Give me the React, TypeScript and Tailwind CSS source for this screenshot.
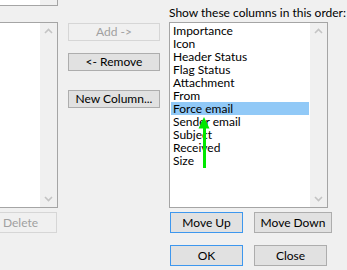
import React from "react"

const columns = [
  "Importance",
  "Icon",
  "Header Status",
  "Flag Status",
  "Attachment",
  "From",
  "Force email",
  "Sender email",
  "Subject",
  "Received",
  "Size",
]

function Chevron({ down = false }: { down?: boolean }) {
  return (
    <svg width="17" height="17" viewBox="0 0 17 17" className="block">
      <path
        d={down ? "M5 7 L8.5 10.5 L12 7" : "M5 10 L8.5 6.5 L12 10"}
        fill="none"
        stroke="#c4c4c4"
        strokeWidth="1.6"
      />
    </svg>
  )
}

function ScrollBar({ arrows = true }: { arrows?: boolean }) {
  return (
    <div className="w-[17px] shrink-0 bg-[#f0f0f0] flex flex-col justify-between">
      {arrows && <Chevron />}
      {arrows && <Chevron down />}
    </div>
  )
}

function Button({
  label,
  w,
  h,
  variant = "normal",
}: {
  label: string
  w: string
  h: string
  variant?: "normal" | "disabled" | "focus"
}) {
  const styles = {
    normal: "bg-[#e1e1e1] border-[#adadad] text-black",
    disabled: "bg-[#f0f0f0] border-[#d6d6d6] text-[#a0a0a0]",
    focus: "bg-[#e1e1e1] border-[#3d97ee] text-black",
  }
  return (
    <div className={`${w} ${h} ${styles[variant]} shrink-0 border flex items-center justify-center leading-none`}>
      {label}
    </div>
  )
}

export default function App() {
  return (
    <div className="relative flex w-[347px] h-[270px] overflow-hidden bg-[#f0f0f0] text-[12px] text-black font-['Segoe_UI','Lato',sans-serif]">
      {/* left: available columns */}
      <div className="-ml-[16px] w-[74px] shrink-0 flex flex-col">
        <div className="h-[6px] flex border-r border-b border-[#a5a5a5]">
          <div className="flex-1 bg-white" />
          <ScrollBar arrows={false} />
        </div>
        <div className="mt-[16px] h-[186px] flex border-t border-r border-b border-[#a5a5a5]">
          <div className="flex-1 bg-white" />
          <ScrollBar />
        </div>
        <div className="mt-[4px]">
          <Button label="Delete" w="w-[73px]" h="h-[21px]" variant="disabled" />
        </div>
      </div>

      {/* middle buttons */}
      <div className="ml-[10px] w-[92px] shrink-0 flex flex-col pt-[23px]">
        <Button label="Add ->" w="w-[92px]" h="h-[18px]" variant="disabled" />
        <div className="mt-[12px]">
          <Button label="<- Remove" w="w-[92px]" h="h-[18px]" />
        </div>
        <div className="mt-[19px]">
          <Button label="New Column..." w="w-[92px]" h="h-[18px]" />
        </div>
      </div>

      {/* right: shown columns */}
      <div className="ml-[9px] w-[164px] shrink-0 flex flex-col">
        <div className="h-[22px] pt-[5px] leading-[16px] whitespace-nowrap">Show these columns in this order:</div>
        <div className="w-[159px] h-[186px] flex border border-[#a5a5a5]">
          <div className="flex-1 bg-white p-[1px]">
            {columns.map((c) => (
              <div
                key={c}
                className={`h-[13px] leading-[13px] pl-[2px] whitespace-nowrap ${c === "Force email" ? "bg-[#91c9f7]" : ""}`}
              >
                {c}
              </div>
            ))}
          </div>
          <ScrollBar />
        </div>
        <div className="mt-[4px] ml-[1px] flex gap-[11px]">
          <Button label="Move Up" w="w-[73px]" h="h-[21px]" variant="focus" />
          <Button label="Move Down" w="w-[78px]" h="h-[21px]" />
        </div>
        <div className="mt-[12px] ml-[1px] flex gap-[11px]">
          <Button label="OK" w="w-[73px]" h="h-[21px]" variant="focus" />
          <Button label="Close" w="w-[73px]" h="h-[21px]" />
        </div>
      </div>

      {/* green annotation arrow */}
      <svg className="absolute left-[196px] top-[114px]" width="16" height="56" viewBox="0 0 16 56">
        <polygon points="8,3 2.5,14.5 13.5,14.5" fill="#00e800" />
        <rect x="7" y="12" width="3" height="42" fill="#00e800" />
      </svg>
    </div>
  )
}
